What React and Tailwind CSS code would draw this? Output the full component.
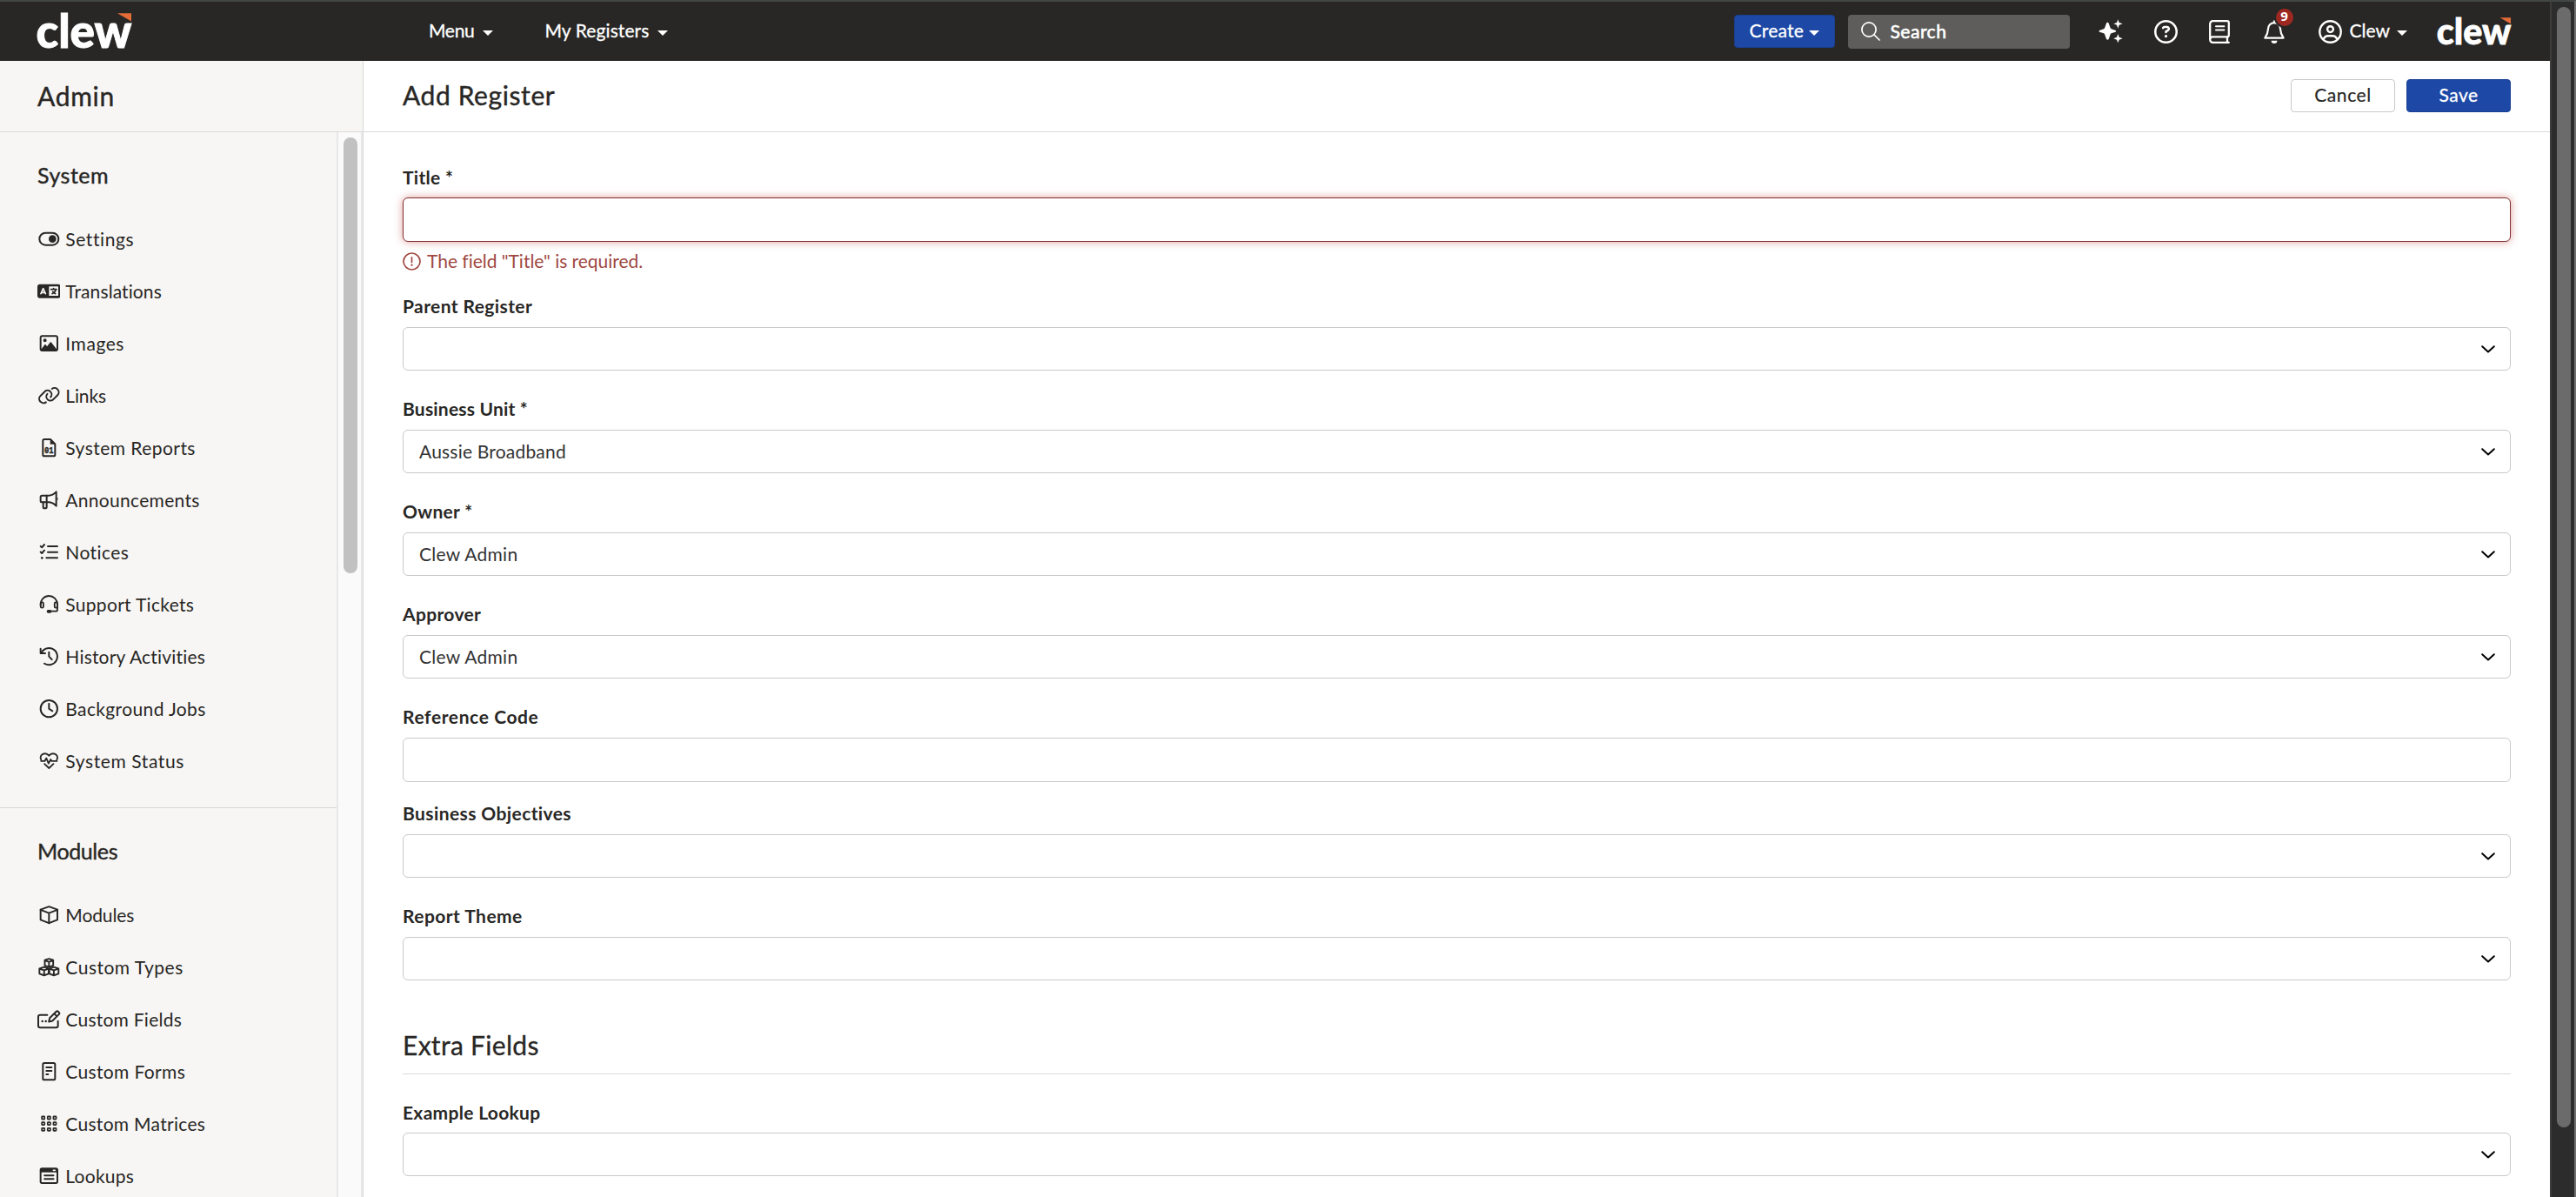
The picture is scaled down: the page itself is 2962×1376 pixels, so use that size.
import React from 'react';
import { FaLanguage, FaRegImage, FaRegClock, FaRegCircleQuestion } from 'react-icons/fa6';

// Line icons drawn on a 640x512 grid, same proportions as the rest of the sidebar set
const Glyph = ({ children, stroke = 48 }) => (
    <svg
        viewBox="0 0 640 512"
        className="w-[26.67px] h-[21.33px] shrink-0 overflow-visible"
        fill="none"
        stroke="currentColor"
        strokeWidth={stroke}
        strokeLinecap="round"
        strokeLinejoin="round"
    >
        {children}
    </svg>
);

const SettingsIcon = () => (
    <Glyph>
        <rect x="56" y="88" width="528" height="336" rx="168" />
        <circle cx="416" cy="256" r="104" fill="currentColor" stroke="none" />
    </Glyph>
);

const TranslationsIcon = () => <FaLanguage className="w-[26.67px] h-[21.33px] shrink-0" />;

const ImagesIcon = () => <FaRegImage className="w-[26.67px] h-[21.33px] shrink-0" />;

const LinksIcon = () => (
    <Glyph>
        <path d="M403 71 A112 112 0 0 1 557 87 A112 112 0 0 1 557 245 L445 357 A112 112 0 0 1 274 212" />
        <path d="M237 441 A112 112 0 0 1 83 425 A112 112 0 0 1 83 267 L195 155 A112 112 0 0 1 366 300" />
    </Glyph>
);

const ReportsIcon = () => (
    <Glyph>
        <path d="M192 24 H360 L488 152 V448 a40 40 0 0 1 -40 40 H192 a40 40 0 0 1 -40 -40 V64 a40 40 0 0 1 40 -40z" />
        <path d="M352 24 V160 H488z" fill="currentColor" stroke="none" />
        <text x="192" y="420" fontSize="250" fontWeight="700" textLength="256" lengthAdjust="spacingAndGlyphs" fill="currentColor" stroke="currentColor" strokeWidth="10" className="font-['Liberation_Mono',monospace]">01</text>
    </Glyph>
);

const AnnouncementsIcon = () => (
    <Glyph>
        <path d="M128 136 H304 C400 136 460 96 520 32 V424 C460 360 400 320 304 320 H128 a40 40 0 0 1 -40 -40 V176 a40 40 0 0 1 40 -40z" />
        <path d="M256 136 V320 M160 320 V448 a40 40 0 0 0 40 40 h16 a40 40 0 0 0 40 -40 V320" />
        <path d="M544 186 a48 48 0 0 1 0 84z" fill="currentColor" stroke="none" />
    </Glyph>
);

const NoticesIcon = () => (
    <Glyph>
        <path d="M288 96 H552 M288 256 H552 M248 416 H552" />
        <path d="M88 92 l36 36 l68 -80 M88 252 l36 36 l68 -80" />
        <circle cx="128" cy="416" r="32" fill="currentColor" stroke="none" />
    </Glyph>
);

const SupportIcon = () => (
    <Glyph stroke={44}>
        <path d="M88 280 V256 A232 232 0 0 1 552 256 V400 a48 48 0 0 1 -48 48 H340" />
        <rect x="90" y="200" width="76" height="152" rx="34" />
        <rect x="474" y="200" width="76" height="152" rx="34" />
        <rect x="256" y="408" width="136" height="88" rx="44" fill="currentColor" stroke="none" />
    </Glyph>
);

const HistoryIcon = () => (
    <Glyph>
        <path d="M88 40 V168 H216" />
        <path d="M104 168 A232 232 0 1 1 192 450" />
        <path d="M320 136 V256 L400 340" />
    </Glyph>
);

const JobsIcon = () => <FaRegClock className="w-[26.67px] h-[21.33px] shrink-0" />;

const StatusIcon = () => (
    <Glyph stroke={44}>
        <path d="M104 232 C56 140 112 54 208 54 C256 54 292 76 320 112 C348 76 384 54 432 54 C528 54 584 140 536 232" />
        <path d="M196 340 L320 456 L444 340" />
        <path d="M104 262 H200 L248 180 L308 328 L368 216 L396 262 H536" />
    </Glyph>
);

const CubeIcon = () => (
    <Glyph>
        <path d="M320 28 L552 112 V392 L320 484 L88 392 V112z" />
        <path d="M88 116 L320 208 L552 116 M320 208 V484" />
    </Glyph>
);

const CubesIcon = () => (
    <Glyph stroke={46}>
        <path d="M320 26 L436 66 V212 L320 256 L204 212 V66z M204 70 L320 116 L436 70 M320 116 V250" />
        <path d="M186 256 L310 298 V440 L186 486 L56 440 V298z M56 302 L186 346 L310 302 M186 346 V480" />
        <path d="M454 256 L584 298 V440 L454 486 L330 440 V298z M330 302 L454 346 L584 302 M454 346 V480" />
    </Glyph>
);

const FieldsIcon = () => (
    <Glyph>
        <path d="M272 136 H80 a56 56 0 0 0 -56 56 V432 a56 56 0 0 0 56 56 H512 a56 56 0 0 0 56 -56 V304" />
        <path d="M316 324 L340 224 L516 48 a44 44 0 0 1 62 0 l14 14 a44 44 0 0 1 0 62 L416 300z M464 100 l76 76" />
        <circle cx="136" cy="312" r="30" fill="currentColor" stroke="none" />
        <circle cx="232" cy="312" r="30" fill="currentColor" stroke="none" />
    </Glyph>
);

const FormsIcon = () => (
    <Glyph>
        <rect x="152" y="24" width="336" height="464" rx="40" />
        <path d="M248 144 H392 M248 240 H392 M248 336 H296" />
    </Glyph>
);

const MatricesIcon = () => (
    <Glyph stroke={42}>
        {[96, 256, 416].map((cy) =>
            [160, 320, 480].map((cx) => (
                <rect key={cx + '-' + cy} x={cx - 37} y={cy - 37} width="74" height="74" rx="14" />
            ))
        )}
    </Glyph>
);

const LookupsIcon = () => (
    <Glyph>
        <rect x="88" y="56" width="464" height="400" rx="40" />
        <path d="M88 64 H552 V160 H88z" fill="currentColor" stroke="none" />
        <path d="M196 248 H444 M196 344 H444" />
        <path d="M440 104 H488" stroke="#f7f6f4" strokeWidth="40" />
    </Glyph>
);

const sections = [
    {
        title: 'System',
        tracking: 'tracking-[0.5px]',
        items: [
            { name: 'Settings', icon: SettingsIcon, tracking: 'tracking-[0.6px]' },
            { name: 'Translations', icon: TranslationsIcon, tracking: 'tracking-[0.1px]' },
            { name: 'Images', icon: ImagesIcon, tracking: 'tracking-[0.55px]' },
            { name: 'Links', icon: LinksIcon, tracking: 'tracking-[-0.15px]' },
            { name: 'System Reports', icon: ReportsIcon, tracking: 'tracking-[0.45px]' },
            { name: 'Announcements', icon: AnnouncementsIcon, tracking: 'tracking-[0.3px]' },
            { name: 'Notices', icon: NoticesIcon, tracking: 'tracking-[0.4px]' },
            { name: 'Support Tickets', icon: SupportIcon, tracking: 'tracking-[0.3px]' },
            { name: 'History Activities', icon: HistoryIcon, tracking: 'tracking-[0.2px]' },
            { name: 'Background Jobs', icon: JobsIcon, tracking: 'tracking-[0.37px]' },
            { name: 'System Status', icon: StatusIcon, tracking: 'tracking-[0.6px]' },
        ],
    },
    {
        title: 'Modules',
        tracking: 'tracking-[-0.4px]',
        items: [
            { name: 'Modules', icon: CubeIcon, tracking: 'tracking-[-0.1px]' },
            { name: 'Custom Types', icon: CubesIcon, tracking: 'tracking-[0.5px]' },
            { name: 'Custom Fields', icon: FieldsIcon, tracking: 'tracking-[0.25px]' },
            { name: 'Custom Forms', icon: FormsIcon, tracking: 'tracking-[0.35px]' },
            { name: 'Custom Matrices', icon: MatricesIcon, tracking: 'tracking-[0.3px]' },
            { name: 'Lookups', icon: LookupsIcon, tracking: 'tracking-[0.25px]' },
        ],
    },
];

const Logo = ({ className }) => (
    <svg viewBox="0 0 108 42" className={className}>
        <text
            x="-1.5"
            y="40.5"
            fontSize="53.5"
            fontWeight="900"
            textLength="110"
            lengthAdjust="spacingAndGlyphs"
            fill="#ffffff"
            stroke="#ffffff"
            strokeWidth="1"
            className="font-['Lato',sans-serif]"
        >
            clew
        </text>
        <path d="M92 1.3 H108 V10.6z" fill="#e36c38" />
    </svg>
);

const Caret = () => (
    <svg viewBox="0 0 12 6" className="w-[12px] h-[6px] shrink-0 mt-[5px]" fill="currentColor">
        <path d="M0 0 H12 L6 6z" />
    </svg>
);

const Chevron = () => (
    <svg viewBox="0 0 16 9" className="w-[16px] h-[9px] shrink-0" fill="none" stroke="#000000" strokeWidth="2" strokeLinecap="round" strokeLinejoin="round">
        <path d="M1.2 1.2 L8 7.4 L14.8 1.2" />
    </svg>
);

const Label = ({ tracking, children }) => (
    <label className={`block h-[30px] leading-[30px] font-bold ${tracking}`}>{children}</label>
);

// Dropdown row: label, current value and chevron
const SelectField = ({ label, value, tracking, valueTracking = '', className = 'mt-[29px]', gap = 'mt-[9px]' }) => (
    <div className={className}>
        <Label tracking={tracking}>{label}</Label>
        <div className={`flex items-center justify-between h-[50px] pl-[18px] pr-[17px] border border-[#c9c9c9] rounded-[6px] bg-white ${gap}`}>
            <span className={`text-[#333333] leading-[30px] ${valueTracking}`}>{value}</span>
            <Chevron />
        </div>
    </div>
);

const Header = () => (
    <header className="flex items-center h-[70px] shrink-0 border-t-2 border-[#434744] bg-[#282725] text-white pl-[43px] pr-[45px]">
        <Logo className="w-[108px] h-[42px] -mt-[3px] overflow-visible" />

        <nav className="flex items-center gap-[60px] ml-[342px] pb-[2px] leading-[30px] [-webkit-text-stroke:0.3px]">
            <div className="flex items-center gap-[9px]">
                <span className="tracking-[-0.3px]">Menu</span>
                <Caret />
            </div>
            <div className="flex items-center gap-[9px]">
                <span className="tracking-[0.1px]">My Registers</span>
                <Caret />
            </div>
        </nav>

        <div className="flex items-center ml-auto">
            <button className="flex items-center justify-between w-[116px] h-[38px] pl-[17px] pr-[17px] pb-[2px] rounded-[4px] border border-[#1a3f92] bg-[#1d48a6] leading-[30px] [-webkit-text-stroke:0.3px]">
                <span className="tracking-[0.25px]">Create</span>
                <Caret />
            </button>

            <div className="flex items-center w-[255px] h-[39px] ml-[15px] pl-[15px] rounded-[4px] bg-[#5e5d5b]">
                <svg viewBox="0 0 22 22" className="w-[22px] h-[22px] -mt-[1px]" fill="none" stroke="currentColor" strokeWidth="1.7" strokeLinecap="round">
                    <circle cx="9" cy="9" r="8.1" />
                    <path d="M15 15 L21 21" />
                </svg>
                <span className="ml-[12px] pb-[1px] leading-[30px] tracking-[0.5px] [-webkit-text-stroke:0.6px]">Search</span>
            </div>

            <svg viewBox="0 0 84 84" className="w-[28px] h-[28px] ml-[33px]" fill="currentColor">
                <path d="M31 11 Q34 11 35 14 L41 31 Q42 33 44 34 L59 39 Q62 41 59 44 L44 49 Q42 50 41 52 L35 69 Q31 73 27 69 L21 52 Q20 50 18 49 L3 44 Q0 41 3 39 L18 34 Q20 33 21 31 L27 14 Q28 11 31 11z" />
                <path d="M67 1 L71 12 L83 16 L71 20 L67 32 L63 20 L52 16 L63 12z" />
                <path d="M67 51 L71 62 L83 67 L71 71 L67 82 L63 71 L52 67 L63 62z" />
            </svg>

            <FaRegCircleQuestion className="w-[27px] h-[27px] ml-[36px]" />

            <svg viewBox="0 0 24 27" className="w-[24px] h-[27px] ml-[36px]" fill="none" stroke="currentColor" strokeWidth="2.3" strokeLinecap="round" strokeLinejoin="round">
                <path d="M22.8 25.8 H4.4 A3.2 3.2 0 0 1 1.2 22.6 V4.4 A3.2 3.2 0 0 1 4.4 1.2 H21 A1.8 1.8 0 0 1 22.8 3 V17.6 A1.8 1.8 0 0 1 21 19.4 H4.4 A3.2 3.2 0 0 0 1.2 22.6" />
                <path d="M21 19.4 V25.8" />
                <path d="M8 7.2 H17.4 M8 11.6 H17.4" strokeWidth="2" />
            </svg>

            <div className="relative w-[24px] h-[27px] ml-[39px]">
                <svg viewBox="0 0 24 27" className="w-[24px] h-[27px]" fill="none" stroke="currentColor" strokeWidth="2.2" strokeLinecap="round" strokeLinejoin="round">
                    <path d="M12 1.4 V3.2 C7.8 3.4 5.2 6.4 5 10.2 C4.8 14.6 3.8 17 1.4 20.6 H22.6 C20.2 17 19.2 14.6 19 10.2 C18.8 6.4 16.2 3.4 12 3.2" />
                    <path d="M8.6 23.8 H15.4 A3.4 3.2 0 0 1 8.6 23.8z" fill="currentColor" stroke="none" />
                </svg>
                <span className="absolute -top-[15px] left-[12px] flex items-center justify-center w-[24px] h-[24px] rounded-full border-2 border-[#282725] bg-[#9d2822] pb-[2px] text-[15px] leading-none font-bold font-['Noto_Sans',sans-serif]">
                    9
                </span>
            </div>

            <svg viewBox="0 0 27 27" className="w-[27px] h-[27px] ml-[39px]" fill="none" stroke="currentColor" strokeWidth="2.4">
                <circle cx="13.5" cy="13.5" r="12.2" />
                <circle cx="13.5" cy="10.6" r="3.4" />
                <path d="M5.6 22.4 C6.6 19.4 8.6 18.2 11 18.2 H16 C18.4 18.2 20.4 19.4 21.4 22.4" />
            </svg>
            <span className="ml-[9px] pb-[2px] leading-[30px] [-webkit-text-stroke:0.3px]">Clew</span>
            <span className="ml-[8px] pb-[2px]"><Caret /></span>
            <Logo className="w-[84px] h-[33px] ml-[35px] -mt-[2px] overflow-visible" />
        </div>
    </header>
);

const Sidebar = () => (
    <aside className="flex flex-col w-[418px] shrink-0 border-r border-[#d9d9d9] bg-[#f7f6f4]">
        <div className="flex items-center h-[82px] shrink-0 pl-[43px] border-b border-[#d9d9d9]">
            <h1 className="pb-[1px] text-[30px] leading-[42px] tracking-[0.7px] [-webkit-text-stroke:0.4px]">Admin</h1>
        </div>
        <div className="flex flex-1 min-h-0">
            <div className="flex-1 overflow-hidden">
                {sections.map((section) => (
                    <section key={section.title} className="border-b border-[#d9d9d9] pb-[23px]">
                        <h2 className={`h-[93px] pt-[34px] pl-[43px] text-[25px] leading-[30px] [-webkit-text-stroke:0.4px] ${section.tracking}`}>
                            {section.title}
                        </h2>
                        <ul>
                            {section.items.map((item) => (
                                <li key={item.name} className="flex items-center h-[60px] pl-[42.67px] gap-[6px]">
                                    <item.icon />
                                    <span className={`leading-[30px] ${item.tracking}`}>{item.name}</span>
                                </li>
                            ))}
                        </ul>
                    </section>
                ))}
            </div>
            {/* scroll track */}
            <div className="w-[30px] border-x-2 border-[#e8e8e8] bg-[#fafafa] pt-[6px] pl-[6px]">
                <div className="w-[16px] h-[501px] rounded-full bg-[#c1c1c1]"></div>
            </div>
        </div>
    </aside>
);

export default function App() {
    return (
        <div className="flex h-screen overflow-hidden bg-white text-[#282725] text-[21px] font-['Lato',sans-serif]">
            <div className="flex flex-col flex-1 min-w-0">
                <Header />
                <div className="flex flex-1 min-h-0">
                    <Sidebar />

                    <main className="flex-1 min-w-0 overflow-hidden">
                        <div className="flex items-center justify-between h-[82px] pl-[45px] pr-[45px] border-b border-[#d9d9d9]">
                            <h1 className="pb-[3px] text-[30px] leading-[42px] tracking-[0.6px] [-webkit-text-stroke:0.4px]">Add Register</h1>
                            <div className="flex gap-[13px] pb-[1px]">
                                <button className="w-[120px] h-[38px] pb-[2px] rounded-[4px] border border-[#c9c9c9] bg-white leading-[30px] tracking-[0.6px] [-webkit-text-stroke:0.2px]">Cancel</button>
                                <button className="w-[120px] h-[38px] pb-[2px] rounded-[4px] border border-[#1a3f92] bg-[#1d48a6] text-white leading-[30px] tracking-[0.5px] [-webkit-text-stroke:0.3px]">Save</button>
                            </div>
                        </div>

                        <form className="px-[45px] pt-[37px]">
                            <Label tracking="tracking-[0.3px]">Title *</Label>
                            <div className="mt-[8px] h-[51px] border border-[#7f2f2d] rounded-[6px] bg-white shadow-[0_0_10px_rgba(190,60,55,0.5)]"></div>
                            <div className="flex items-center h-[30px] mt-[7px] text-[#a04841]">
                                <svg viewBox="0 0 21 21" className="w-[21px] h-[21px]" fill="none" stroke="currentColor" strokeWidth="1.7" strokeLinecap="round">
                                    <circle cx="10.5" cy="10.5" r="9.5" />
                                    <path d="M10.5 5.8 V11.4" />
                                    <path d="M10.5 14.7 V14.8" strokeWidth="2.2" />
                                </svg>
                                <span className="ml-[7px] leading-[30px] tracking-[-0.02px]">The field "Title" is required.</span>
                            </div>

                            <SelectField label="Parent Register" tracking="tracking-[0.4px]" className="mt-[22px]" />
                            <SelectField label="Business Unit *" tracking="tracking-[0.2px]" value="Aussie Broadband" valueTracking="tracking-[0.2px]" />
                            <SelectField label="Owner *" tracking="tracking-[0.3px]" value="Clew Admin" valueTracking="tracking-[0.3px]" />
                            <SelectField label="Approver" tracking="tracking-[0.35px]" value="Clew Admin" valueTracking="tracking-[0.3px]" />

                            <div className="mt-[29px]">
                                <Label tracking="tracking-[0.6px]">Reference Code</Label>
                                <div className="mt-[9px] h-[51px] border border-[#c9c9c9] rounded-[6px] bg-white"></div>
                            </div>

                            <SelectField label="Business Objectives" tracking="tracking-[0.4px]" className="mt-[21px]" />
                            <SelectField label="Report Theme" tracking="tracking-[0.45px]" />

                            <h2 className="mt-[53px] pb-[12px] border-b border-[#d9d9d9] text-[30px] leading-[42px] tracking-[0.3px] [-webkit-text-stroke:0.3px]">
                                Extra Fields
                            </h2>
                            <SelectField label="Example Lookup" tracking="tracking-[0.3px]" gap="mt-[8px]" />
                        </form>
                    </main>
                </div>
            </div>

            {/* window scrollbar */}
            <div className="w-[30px] shrink-0 border-l-2 border-r-2 border-t-2 border-l-[#3d3d3d] border-r-[#6f6f6f] border-t-[#434744] bg-[#2c2c2c] pt-[6px] pl-[6px]">
                <div className="w-[16px] h-[1288px] rounded-full bg-[#6b6b6b]"></div>
            </div>
        </div>
    );
}
